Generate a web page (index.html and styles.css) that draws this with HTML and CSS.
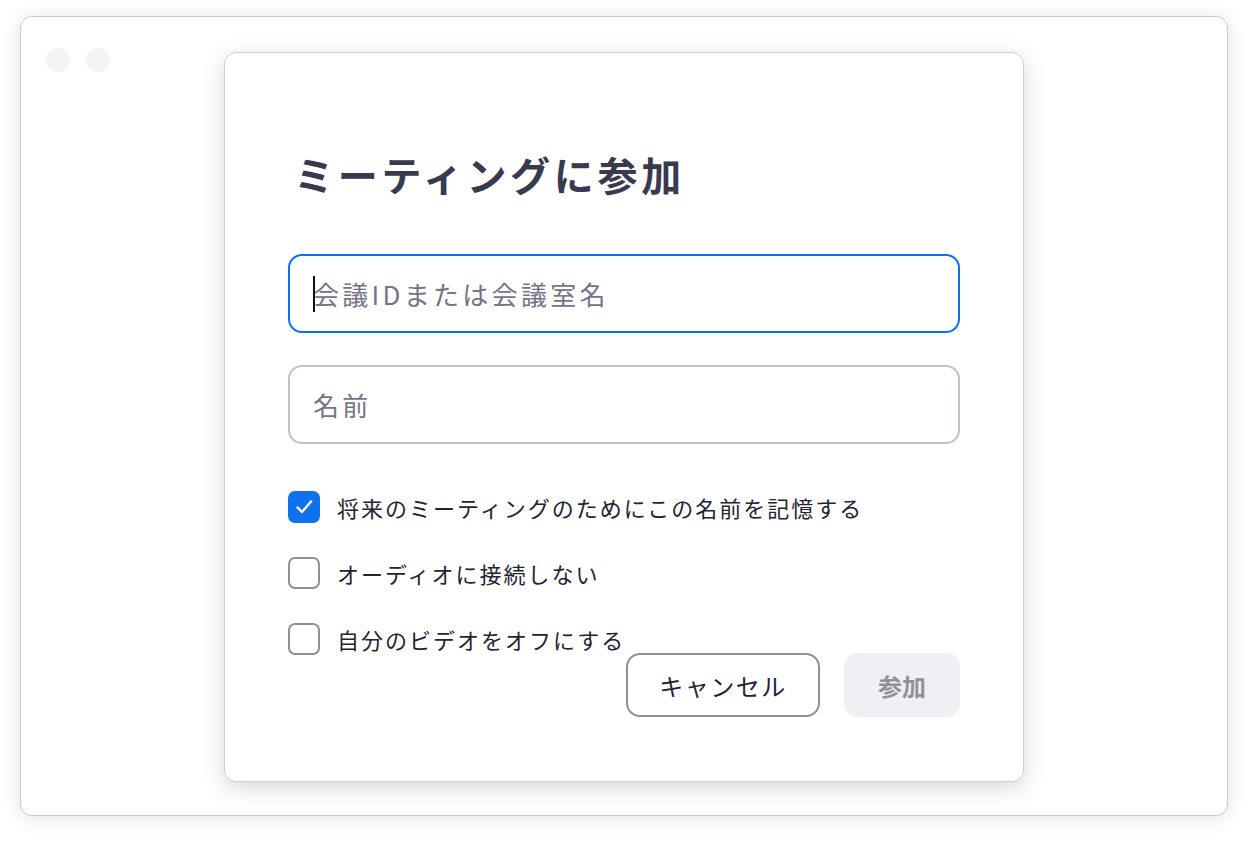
FILE: index.html
```html
<!DOCTYPE html>
<html lang="ja">
<head>
<meta charset="utf-8">
<title>ミーティングに参加</title>
<link rel="stylesheet" href="styles.css">
</head>
<body>
<div class="window">
  <div class="dots"><span class="dot"></span><span class="dot"></span></div>
  <div class="dialog">
    <h1 class="title">ミーティングに参加</h1>
    <div class="field focused"><span class="caret"></span><span class="placeholder">会議IDまたは会議室名</span></div>
    <div class="field"><span class="placeholder">名前</span></div>
    <ul class="options">
      <li class="option"><span class="box checked"><svg viewBox="0 0 32 32" width="32" height="32"><path d="M9.5 16.5 L14 21 L23 10.5" fill="none" stroke="#fff" stroke-width="2.4" stroke-linecap="round" stroke-linejoin="round"/></svg></span><span class="label">将来のミーティングのためにこの名前を記憶する</span></li>
      <li class="option"><span class="box"></span><span class="label">オーディオに接続しない</span></li>
      <li class="option"><span class="box"></span><span class="label">自分のビデオをオフにする</span></li>
    </ul>
    <div class="footer">
      <button class="btn cancel">キャンセル</button>
      <button class="btn join">参加</button>
    </div>
  </div>
</div>
</body>
</html>
```
FILE: styles.css
```css
html, body {
  margin: 0;
  padding: 0;
  background: #ffffff;
}
body {
  width: 1260px;
  height: 854px;
  padding: 16px 0 0 20px;
  box-sizing: border-box;
  font-family: "Noto Sans CJK JP", "Noto Sans", sans-serif;
}
.window {
  position: relative;
  width: 1208px;
  height: 800px;
  box-sizing: border-box;
  background: #fff;
  border: 1px solid #cbcbcb;
  border-radius: 12px;
  box-shadow: 0 2px 18px rgba(0, 0, 0, 0.12);
}
.dots {
  display: flex;
  gap: 16px;
  padding: 31px 0 0 25px;
}
.dot {
  width: 24px;
  height: 24px;
  border-radius: 50%;
  background: #f4f4f4;
}
.dialog {
  position: absolute;
  left: 203px;
  top: 35px;
  width: 800px;
  height: 730px;
  box-sizing: border-box;
  background: #fff;
  border: 1px solid #d0d0d0;
  border-radius: 12px;
  box-shadow: 0 6px 22px rgba(0, 0, 0, 0.16);
  padding: 93px 63px 0 63px;
  display: flex;
  flex-direction: column;
}
.title {
  margin: 0 0 52px 6px;
  font-size: 40px;
  line-height: 56px;
  font-weight: 700;
  color: #393a4f;
  letter-spacing: 3.7px;
}
.field {
  height: 79px;
  box-sizing: border-box;
  border: 2px solid #c1c1cc;
  border-radius: 14px;
  display: flex;
  align-items: center;
  padding: 0 0 0 23px;
  margin-bottom: 32px;
}
.field.focused {
  border-color: #0e72ed;
}
.caret {
  width: 2px;
  height: 36px;
  background: #111;
  margin-right: -2px;
  position: relative;
  z-index: 1;
}
.placeholder {
  font-size: 26px;
  color: #747487;
  line-height: 1;
  letter-spacing: 3.3px;
}
.options {
  list-style: none;
  margin: 15px 0 0 0;
  padding: 0;
  display: flex;
  flex-direction: column;
  gap: 34px;
}
.option {
  display: flex;
  align-items: center;
  height: 32px;
}
.box {
  width: 32px;
  height: 32px;
  box-sizing: border-box;
  border: 2px solid #909099;
  border-radius: 7px;
  background: #fff;
  flex: none;
  display: flex;
}
.box.checked {
  background: #0e72ed;
  border-color: #0e72ed;
}
.box.checked svg {
  margin: -2px;
}
.label {
  margin-left: 17px;
  font-size: 22px;
  letter-spacing: 2px;
  color: #232333;
  line-height: 1;
}
.footer {
  display: flex;
  justify-content: flex-end;
  gap: 24px;
  margin-top: -2px;
}
.btn {
  height: 64px;
  box-sizing: border-box;
  border-radius: 14px;
  font-family: "Noto Sans CJK JP", "Noto Sans", sans-serif;
  font-size: 24px;
  padding: 0;
  cursor: pointer;
}
.cancel {
  width: 194px;
  background: #fff;
  border: 2px solid #909099;
  color: #232333;
  letter-spacing: 1.5px;
}
.join {
  width: 116px;
  background: #efeff4;
  border: none;
  color: #909099;
  font-weight: 700;
}
```
